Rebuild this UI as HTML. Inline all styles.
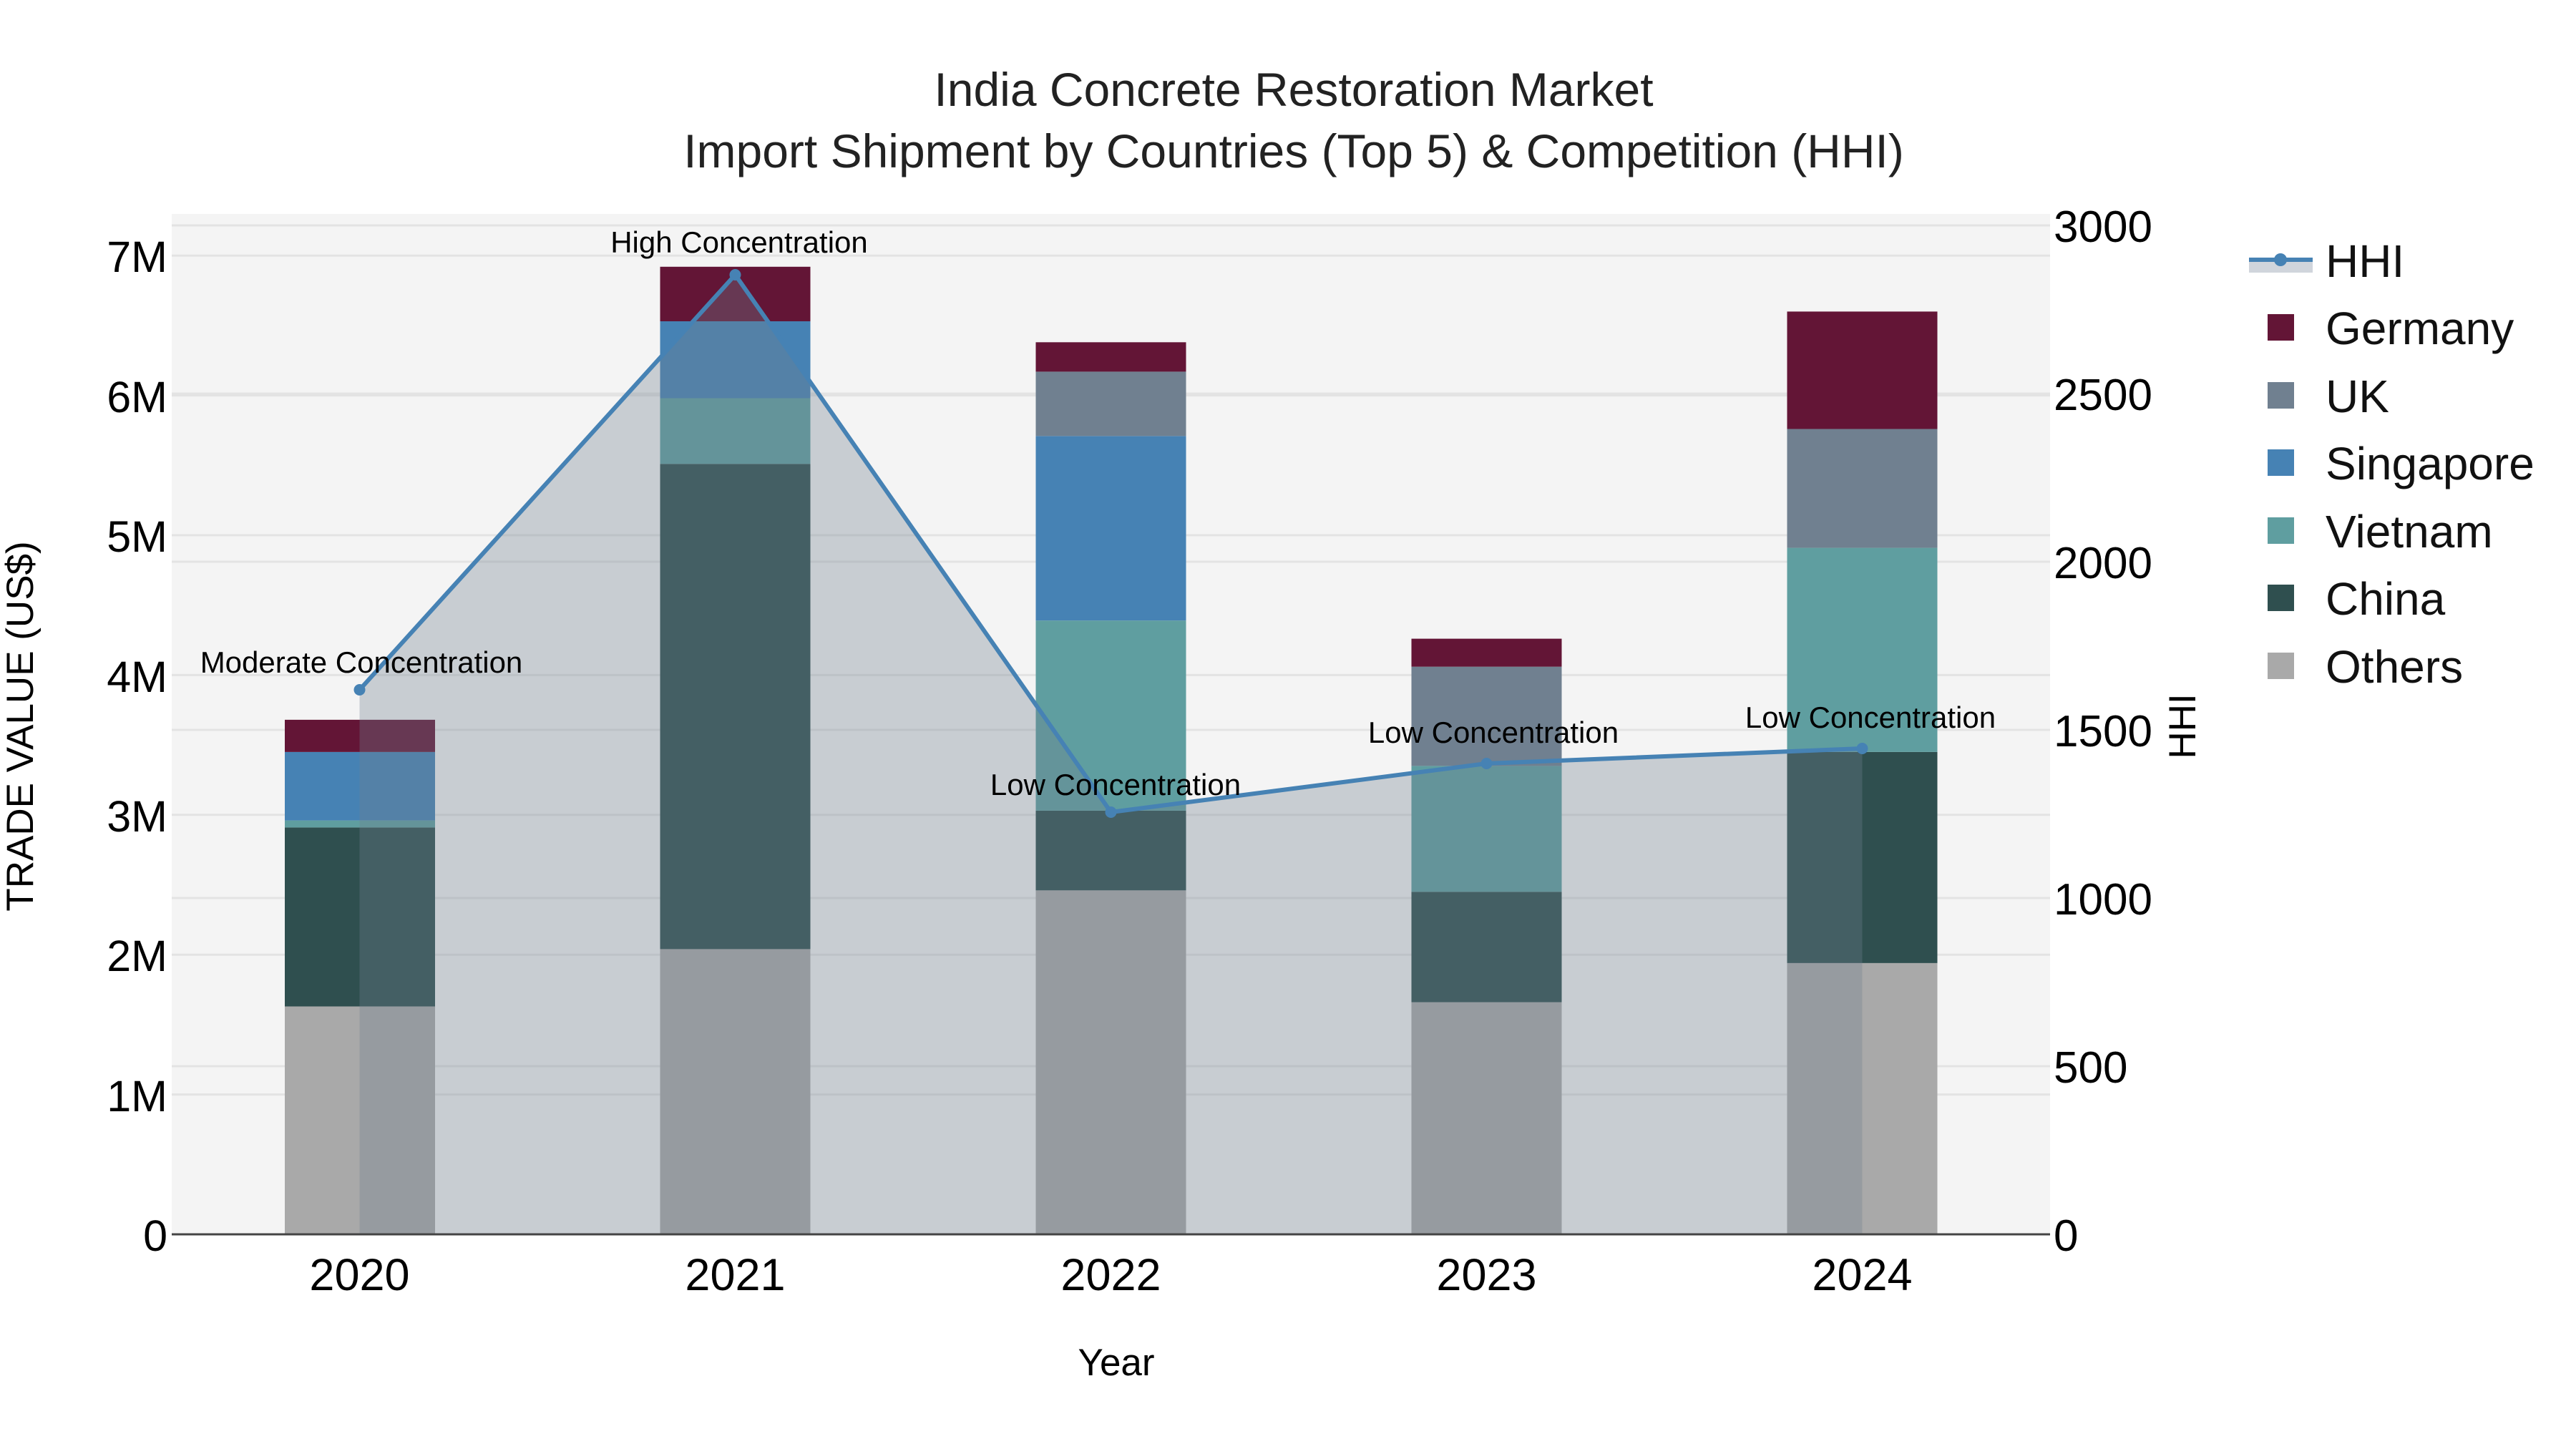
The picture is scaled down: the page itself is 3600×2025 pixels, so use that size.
<!DOCTYPE html>
<html><head><meta charset="utf-8"><style>html,body{margin:0;padding:0;background:#fff}svg{display:block}</style></head>
<body>
<svg width="3600" height="2025" viewBox="0 0 3600 2025" xmlns="http://www.w3.org/2000/svg" font-family="Liberation Sans, Arial, sans-serif">
<rect width="3600" height="2025" fill="#fff"/>
<rect x="240" y="299" width="2625" height="1426" fill="#f4f4f4"/>
<g stroke="#e3e3e3" stroke-width="3">
<line x1="240" x2="2865" y1="1529.6" y2="1529.6"/><line x1="240" x2="2865" y1="1334.2" y2="1334.2"/>
<line x1="240" x2="2865" y1="1138.8" y2="1138.8"/><line x1="240" x2="2865" y1="943.4" y2="943.4"/>
<line x1="240" x2="2865" y1="748" y2="748"/><line x1="240" x2="2865" y1="552.6" y2="552.6"/>
<line x1="240" x2="2865" y1="357.2" y2="357.2"/>
<line x1="240" x2="2865" y1="1490" y2="1490"/><line x1="240" x2="2865" y1="1255" y2="1255"/>
<line x1="240" x2="2865" y1="1020" y2="1020"/><line x1="240" x2="2865" y1="785" y2="785"/>
<line x1="240" x2="2865" y1="550" y2="550"/><line x1="240" x2="2865" y1="315" y2="315"/>
</g>
<rect x="398" width="210" y="1406.5" height="318.5" fill="#a9a9a9"/>
<rect x="398" width="210" y="1156.4" height="250.1" fill="#2f4f4f"/>
<rect x="398" width="210" y="1146.6" height="9.8" fill="#5f9ea0"/>
<rect x="398" width="210" y="1050.9" height="95.7" fill="#4682b4"/>
<rect x="398" width="210" y="1005.9" height="45" fill="#631536"/>
<rect x="922.5" width="210" y="1326.4" height="398.6" fill="#a9a9a9"/>
<rect x="922.5" width="210" y="648.3" height="678.1" fill="#2f4f4f"/>
<rect x="922.5" width="210" y="556.5" height="91.8" fill="#5f9ea0"/>
<rect x="922.5" width="210" y="449" height="107.5" fill="#4682b4"/>
<rect x="922.5" width="210" y="372.8" height="76.2" fill="#631536"/>
<rect x="1447.5" width="210" y="1244.3" height="480.7" fill="#a9a9a9"/>
<rect x="1447.5" width="210" y="1132.9" height="111.4" fill="#2f4f4f"/>
<rect x="1447.5" width="210" y="867.2" height="265.7" fill="#5f9ea0"/>
<rect x="1447.5" width="210" y="609.3" height="257.9" fill="#4682b4"/>
<rect x="1447.5" width="210" y="519.4" height="89.9" fill="#708090"/>
<rect x="1447.5" width="210" y="478.3" height="41.1" fill="#631536"/>
<rect x="1972.5" width="210" y="1400.6" height="324.4" fill="#a9a9a9"/>
<rect x="1972.5" width="210" y="1246.3" height="154.3" fill="#2f4f4f"/>
<rect x="1972.5" width="210" y="1070.4" height="175.9" fill="#5f9ea0"/>
<rect x="1972.5" width="210" y="931.7" height="138.7" fill="#708090"/>
<rect x="1972.5" width="210" y="892.6" height="39.1" fill="#631536"/>
<rect x="2497.5" width="210" y="1345.9" height="379.1" fill="#a9a9a9"/>
<rect x="2497.5" width="210" y="1050.9" height="295" fill="#2f4f4f"/>
<rect x="2497.5" width="210" y="765.6" height="285.3" fill="#5f9ea0"/>
<rect x="2497.5" width="210" y="599.5" height="166.1" fill="#708090"/>
<rect x="2497.5" width="210" y="435.4" height="164.1" fill="#631536"/>
<polygon points="502.5,1725 502.5,964 1027.5,384 1552.5,1135 2077.5,1067 2602.5,1046 2602.5,1725" fill="#708090" fill-opacity="0.33"/>
<polyline points="502.5,964 1027.5,384 1552.5,1135 2077.5,1067 2602.5,1046" fill="none" stroke="#4682b4" stroke-width="6"/>
<g fill="#4682b4"><circle cx="502.5" cy="964" r="8"/><circle cx="1027.5" cy="384" r="8"/><circle cx="1552.5" cy="1135" r="8"/><circle cx="2077.5" cy="1067" r="8"/><circle cx="2602.5" cy="1046" r="8"/></g>
<line x1="240" x2="2865" y1="1725" y2="1725" stroke="#444" stroke-width="3"/>
<g font-size="42" text-anchor="middle" fill="#000">
<text x="505" y="940">Moderate Concentration</text>
<text x="1033" y="353">High Concentration</text>
<text x="1559" y="1111">Low Concentration</text>
<text x="2087" y="1038">Low Concentration</text>
<text x="2614" y="1017">Low Concentration</text>
</g>
<g font-size="61" text-anchor="end" fill="#000">
<text x="234" y="380">7M</text><text x="234" y="576">6M</text><text x="234" y="771">5M</text>
<text x="234" y="967">4M</text><text x="234" y="1162">3M</text><text x="234" y="1357">2M</text>
<text x="234" y="1553">1M</text><text x="234" y="1748">0</text>
</g>
<g font-size="62" text-anchor="start" fill="#000">
<text x="2870" y="338">3000</text><text x="2870" y="573">2500</text><text x="2870" y="808">2000</text>
<text x="2870" y="1043">1500</text><text x="2870" y="1278">1000</text><text x="2870" y="1513">500</text>
<text x="2870" y="1748">0</text>
</g>
<g font-size="63" text-anchor="middle" fill="#000">
<text x="502.5" y="1803">2020</text><text x="1027.5" y="1803">2021</text><text x="1552.5" y="1803">2022</text>
<text x="2077.5" y="1803">2023</text><text x="2602.5" y="1803">2024</text>
</g>
<text x="1560" y="1922" font-size="53" text-anchor="middle">Year</text>
<text transform="translate(46,1015) rotate(-90)" font-size="53" text-anchor="middle">TRADE VALUE (US$)</text>
<text transform="translate(3068,1015) rotate(-90)" font-size="53" text-anchor="middle">HHI</text>
<g font-size="66" text-anchor="middle" fill="#222">
<text x="1808" y="148">India Concrete Restoration Market</text>
<text x="1808" y="234">Import Shipment by Countries (Top 5) &amp; Competition (HHI)</text>
</g>
<rect x="3143" y="363" width="89" height="18" fill="#d0d5dc"/>
<line x1="3143" x2="3232" y1="363" y2="363" stroke="#4682b4" stroke-width="6"/>
<circle cx="3187" cy="363" r="9" fill="#4682b4"/>
<rect x="3169" y="439" width="37" height="37" fill="#631536"/>
<rect x="3169" y="534" width="37" height="37" fill="#708090"/>
<rect x="3169" y="628" width="37" height="37" fill="#4682b4"/>
<rect x="3169" y="723" width="37" height="37" fill="#5f9ea0"/>
<rect x="3169" y="817" width="37" height="37" fill="#2f4f4f"/>
<rect x="3169" y="912" width="37" height="37" fill="#a9a9a9"/>
<g font-size="64" fill="#111">
<text x="3250" y="387">HHI</text>
<text x="3250" y="481">Germany</text>
<text x="3250" y="576">UK</text>
<text x="3250" y="670">Singapore</text>
<text x="3250" y="765">Vietnam</text>
<text x="3250" y="859">China</text>
<text x="3250" y="954">Others</text>
</g>
</svg>
</body></html>
